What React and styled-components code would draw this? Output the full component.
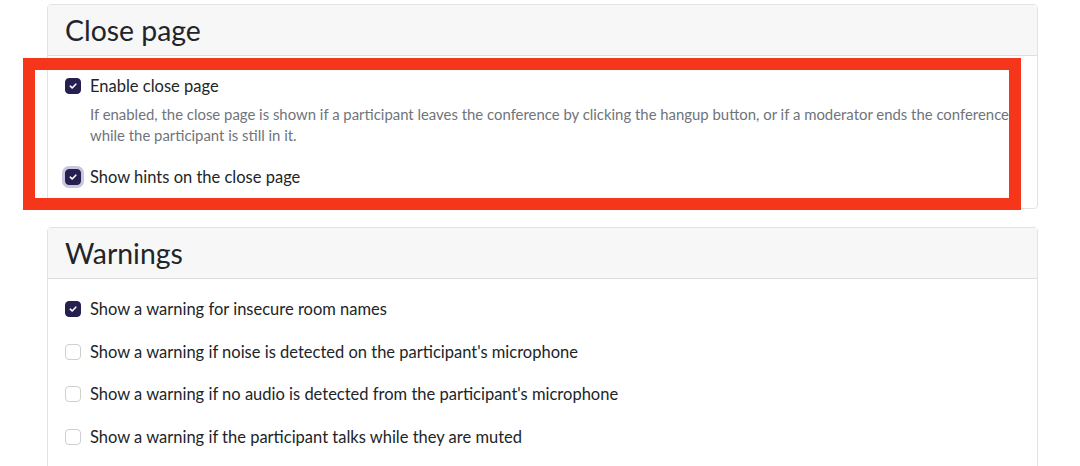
import React from 'react';
import styled, { createGlobalStyle } from 'styled-components';

const Global = createGlobalStyle`
  body {
    margin: 0;
    background: #fff;
    font-family: Lato, "Open Sans", sans-serif;
    color: #212529;
  }
`;

const Page = styled.div`
  position: relative;
  width: 1080px;
  height: 466px;
  overflow: hidden;
  padding: 4px 0 0 47px;
  box-sizing: border-box;
`;

const Card = styled.section`
  width: 989px;
  border: 1px solid #e3e3e3;
  border-radius: 4px;
  margin-bottom: 18px;
  background: #fff;
`;

const CardHeader = styled.div`
  background: #f7f7f7;
  border-bottom: 1px solid #dedede;
  height: 50px;
  display: flex;
  align-items: center;
  padding: 0 17px;
  font-size: 28.4px;
  color: #212529;
`;

const CardBody = styled.div`
  padding: ${(p) => p.$pad || '18px 17px 19px'};
  display: flex;
  flex-direction: column;
  gap: ${(p) => p.$gap || '0px'};
`;

const Row = styled.label`
  display: flex;
  align-items: center;
  gap: 9px;
  height: 24px;
  font-size: 16.5px;
`;

const Box = styled.span`
  width: 16px;
  height: 16px;
  flex: none;
  box-sizing: border-box;
  border-radius: 4px;
  display: flex;
  align-items: center;
  justify-content: center;
  background: ${(p) => (p.$checked ? '#25204f' : '#fff')};
  border: 1px solid ${(p) => (p.$checked ? '#25204f' : '#cfcfcf')};
  box-shadow: ${(p) => (p.$focus ? '0 0 0 3px #c9c7dc' : 'none')};
`;

const Help = styled.p`
  margin: 6px 0 19px 25px;
  font-size: 14.9px;
  line-height: 21px;
  color: #6f747a;
  max-width: 925px;
`;

const Highlight = styled.div`
  position: absolute;
  left: 23px;
  top: 58px;
  width: 998px;
  height: 152px;
  box-sizing: border-box;
  border: 12px solid #f5361a;
  pointer-events: none;
`;

const Check = ({ checked, focus, children }) => (
  <Row>
    <Box $checked={checked} $focus={focus}>
      {checked && (
        <svg width="10" height="10" viewBox="0 0 10 10">
          <path d="M2.3 5.2 L4.2 7 L7.8 3.2" fill="none" stroke="#fff" strokeWidth="1.6" strokeLinecap="round" strokeLinejoin="round" />
        </svg>
      )}
    </Box>
    <span>{children}</span>
  </Row>
);

export default function App() {
  return (
    <Page>
      <Global />
      <Card>
        <CardHeader>Close page</CardHeader>
        <CardBody>
          <Check checked>Enable close page</Check>
          <Help>
            If enabled, the close page is shown if a participant leaves the conference by clicking the hangup button, or if a moderator ends the conference while the participant is still in it.
          </Help>
          <Check checked focus>Show hints on the close page</Check>
        </CardBody>
      </Card>
      <Card>
        <CardHeader>Warnings</CardHeader>
        <CardBody $pad="18px 17px 20px" $gap="18.5px">
          <Check checked>Show a warning for insecure room names</Check>
          <Check>Show a warning if noise is detected on the participant's microphone</Check>
          <Check>Show a warning if no audio is detected from the participant's microphone</Check>
          <Check>Show a warning if the participant talks while they are muted</Check>
        </CardBody>
      </Card>
      <Highlight />
    </Page>
  );
}
